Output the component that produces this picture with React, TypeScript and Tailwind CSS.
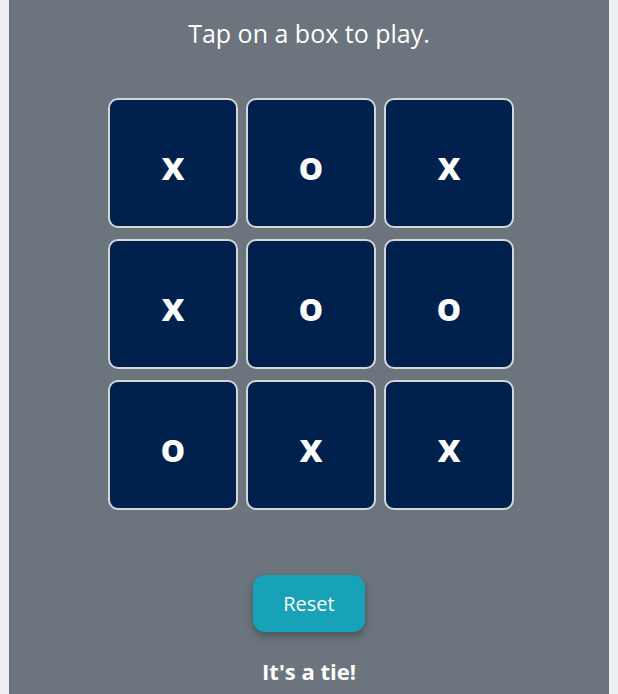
import React, { useState } from "react";

const START = ["x", "o", "x", "x", "o", "o", "o", "x", "x"];

export default function App() {
  const [board, setBoard] = useState<string[]>(START);

  return (
    <div className="min-h-[694px] bg-[#eceef1] px-[9px] font-['Open_Sans',sans-serif]">
      <div className="flex min-h-[694px] w-[600px] flex-col items-center bg-[#6c757d] text-white">
        <p className="mt-[16px] h-[34px] text-[25px] leading-[34px]">Tap on a box to play.</p>

        <div className="ml-[4px] mt-[48px] grid grid-cols-[repeat(3,130px)] gap-x-[8px] gap-y-[11px]">
          {board.map((v, i) => (
            <button
              key={i}
              className="flex h-[130px] w-[130px] items-center justify-center rounded-[10px] border-2 border-[#d4d6d8] bg-[#00204d] text-[40px] font-bold leading-none text-white"
            >
              <span className="mt-[4px]">{v}</span>
            </button>
          ))}
        </div>

        <button
          onClick={() => setBoard(START.map(() => ""))}
          className="mt-[65px] h-[57px] w-[112px] rounded-[12px] bg-[#17a2b8] text-[20px] text-white shadow-[0_4px_8px_rgba(0,0,0,0.3)]"
        >
          Reset
        </button>

        <p className="mt-[24px] text-[22px] font-bold leading-[30px]">It's a tie!</p>
      </div>
    </div>
  );
}
